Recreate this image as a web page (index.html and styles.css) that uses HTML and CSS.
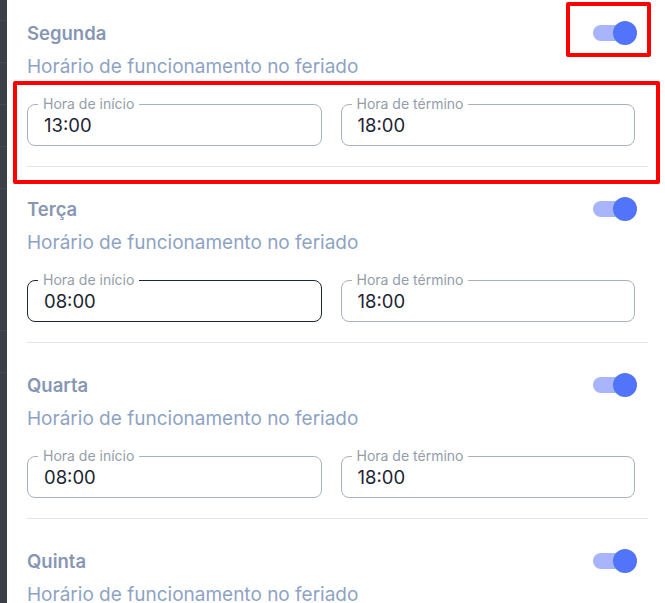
FILE: index.html
```html
<!DOCTYPE html>
<html lang="pt-BR">
<head>
<meta charset="utf-8">
<title>Horários</title>
<link rel="stylesheet" href="styles.css">
</head>
<body>
<div class="page">
  <aside class="rail">
    <span class="rail-line"></span>
    <span class="rail-line"></span>
    <span class="rail-line"></span>
    <span class="rail-line"></span>
    <span class="rail-line"></span>
    <span class="rail-line rail-blue"></span>
    <span class="rail-line"></span>
  </aside>
  <main class="content">
    <section class="day">
      <div class="day-head">
        <h2 class="day-name">Segunda</h2>
        <span class="switch"><span class="switch-track"></span><span class="switch-thumb"></span></span>
      </div>
      <p class="day-sub">Horário de funcionamento no feriado</p>
      <div class="fields">
        <fieldset class="field"><legend>Hora de início</legend><div class="value">13:00</div></fieldset>
        <fieldset class="field"><legend>Hora de término</legend><div class="value">18:00</div></fieldset>
      </div>
      <hr class="divider">
    </section>
    <section class="day">
      <div class="day-head">
        <h2 class="day-name">Terça</h2>
        <span class="switch"><span class="switch-track"></span><span class="switch-thumb"></span></span>
      </div>
      <p class="day-sub">Horário de funcionamento no feriado</p>
      <div class="fields">
        <fieldset class="field field-focus"><legend>Hora de início</legend><div class="value">08:00</div></fieldset>
        <fieldset class="field"><legend>Hora de término</legend><div class="value">18:00</div></fieldset>
      </div>
      <hr class="divider">
    </section>
    <section class="day">
      <div class="day-head">
        <h2 class="day-name">Quarta</h2>
        <span class="switch"><span class="switch-track"></span><span class="switch-thumb"></span></span>
      </div>
      <p class="day-sub">Horário de funcionamento no feriado</p>
      <div class="fields">
        <fieldset class="field"><legend>Hora de início</legend><div class="value">08:00</div></fieldset>
        <fieldset class="field"><legend>Hora de término</legend><div class="value">18:00</div></fieldset>
      </div>
      <hr class="divider">
    </section>
    <section class="day">
      <div class="day-head">
        <h2 class="day-name">Quinta</h2>
        <span class="switch"><span class="switch-track"></span><span class="switch-thumb"></span></span>
      </div>
      <p class="day-sub">Horário de funcionamento no feriado</p>
    </section>
  </main>
  <div class="mark mark-toggle"></div>
  <div class="mark mark-fields"></div>
</div>
</body>
</html>
```
FILE: styles.css
```css
html, body {
  margin: 0;
  padding: 0;
  height: 100%;
  overflow: hidden;
  background: #ffffff;
}
body {
  font-family: Inter, "Noto Sans", sans-serif;
}
.page {
  position: relative;
  display: flex;
  height: 603px;
  overflow: hidden;
}
.rail {
  width: 7px;
  flex: 0 0 7px;
  background: #3b3f46;
  display: flex;
  flex-direction: column;
  padding-top: 20px;
  gap: 41px;
}
.rail-line {
  display: block;
  height: 1px;
  background: #474b53;
}
.rail-blue {
  background: #3f4a6a;
  margin-top: 100px;
}
.content {
  flex: 0 0 621px;
  padding-left: 20px;
}
.day {
  padding-top: 21px;
}
.day + .day {
  padding-top: 30px;
}
.day-head {
  display: flex;
  align-items: center;
  justify-content: space-between;
  height: 24px;
}
.day-name {
  margin: 0;
  font-size: 18.5px;
  line-height: 24px;
  font-weight: 600;
  color: #8797b3;
}
.switch {
  display: flex;
  align-items: center;
  width: 44px;
  height: 24px;
  margin-right: 11px;
  margin-top: -1px;
}
.switch-track {
  display: block;
  width: 40px;
  height: 16px;
  border-radius: 8px;
  background: #a8b5fc;
}
.switch-thumb {
  display: block;
  width: 24px;
  height: 24px;
  border-radius: 50%;
  background: #5274fa;
  margin-left: -20px;
}
.day-sub {
  margin: 9px 0 0;
  font-size: 19px;
  line-height: 26px;
  color: #8ea3c4;
}
.fields {
  display: flex;
  gap: 19px;
  width: 608px;
  margin-top: 16px;
}
.field {
  flex: 1 1 0;
  min-width: 0;
  margin: 0;
  padding: 0 10px 9px;
  border: 1px solid #a9b2bf;
  border-radius: 8px;
}
.field-focus {
  border-color: #1f2733;
}
.field legend {
  padding: 0 5px;
  font-size: 14px;
  line-height: 16px;
  color: #949da8;
}
.value {
  padding: 2px 0 0 6px;
  font-size: 18.5px;
  line-height: 22px;
  color: #1c2432;
}
.divider {
  margin: 20px 0 0;
  border: 0;
  height: 1px;
  background: #e6e7e9;
}
.mark {
  position: absolute;
  border: 4px solid #ff0000;
  border-radius: 2px;
  box-sizing: border-box;
}
.mark-toggle {
  left: 566px;
  top: 2px;
  width: 85px;
  height: 55px;
}
.mark-fields {
  left: 13px;
  top: 81px;
  width: 647px;
  height: 103px;
}
```
